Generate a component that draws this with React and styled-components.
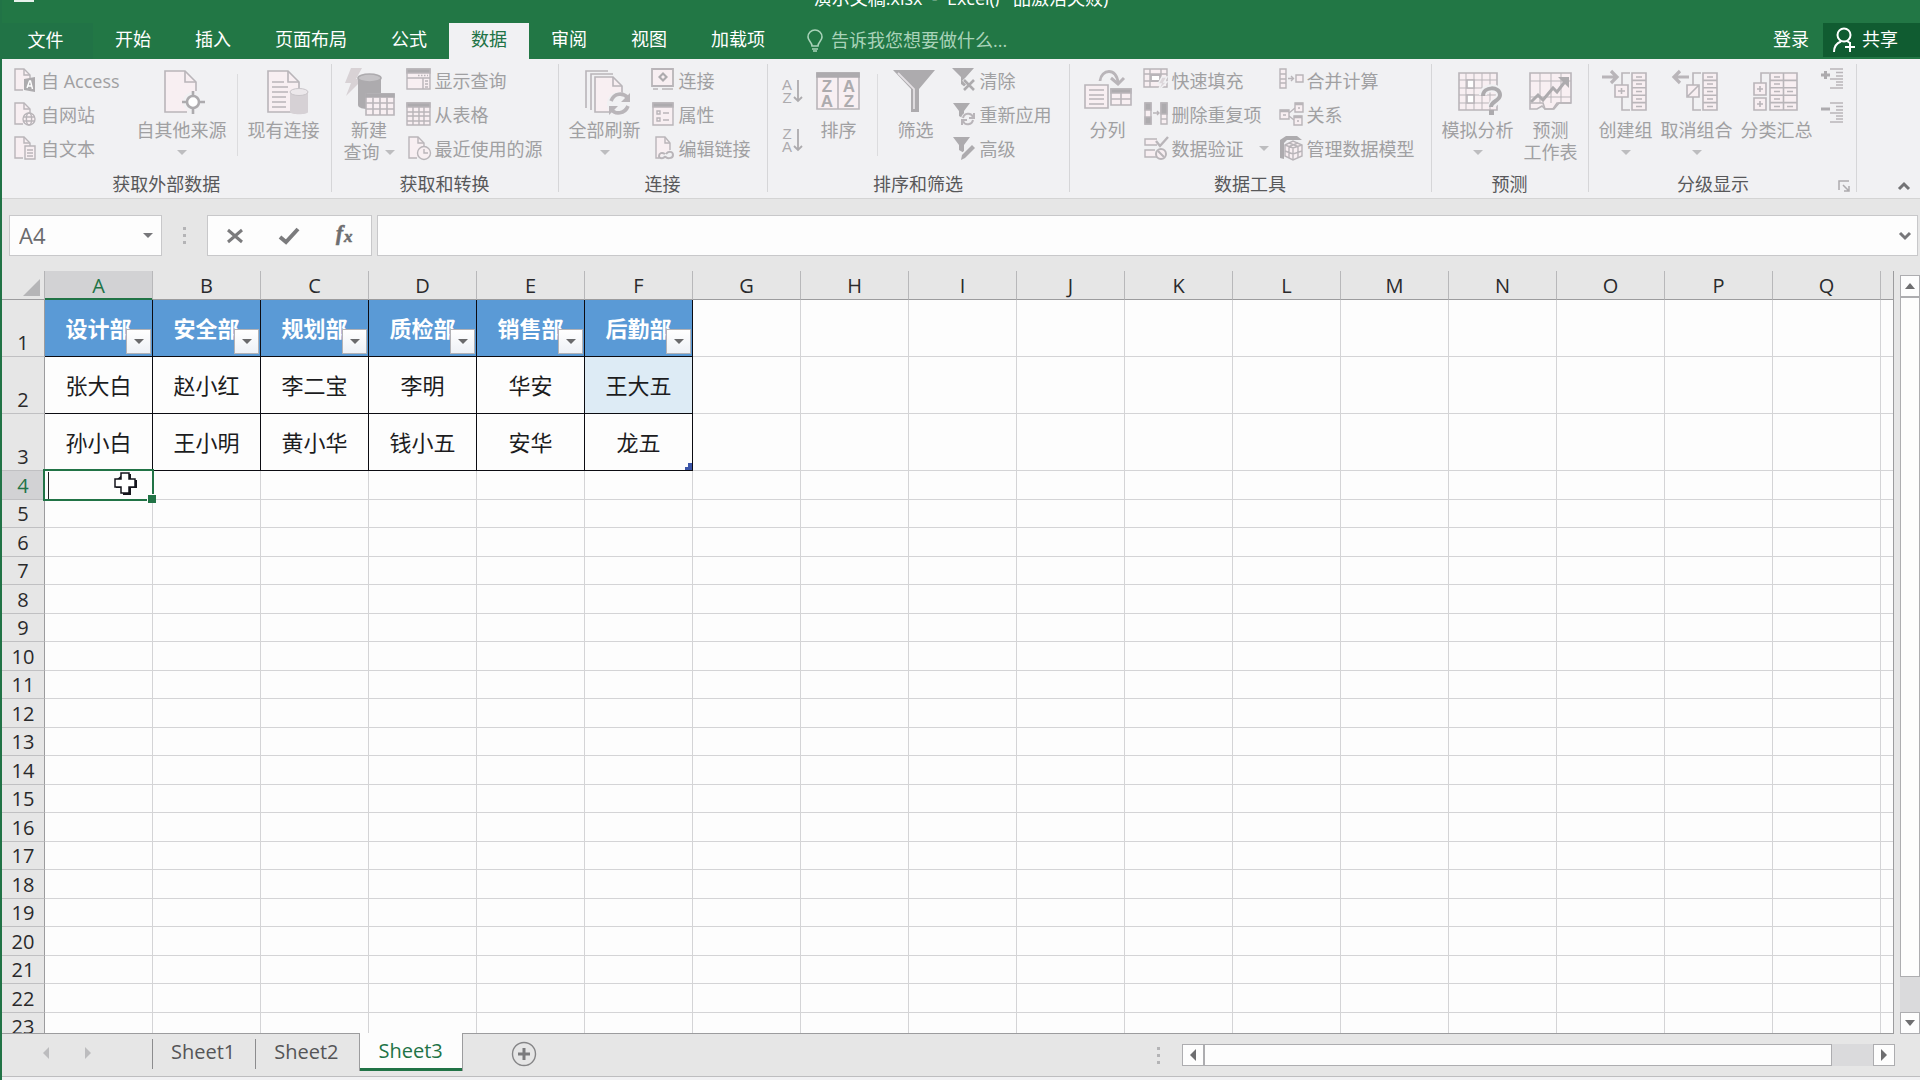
import React from 'react';
import styled, { createGlobalStyle, css } from 'styled-components';

const GlobalStyle = createGlobalStyle`
  * {
    box-sizing: border-box;
  }
  body {
    margin: 0;
    overflow: hidden;
    background: #e6e6e6;
    font-family: "Open Sans", "Noto Sans CJK SC", sans-serif;
    font-size: 18px;
  }
  button, input {
    margin: 0;
    padding: 0;
    border: 0;
    background: none;
    font: inherit;
    color: inherit;
  }
  svg {
    display: block;
    flex: none;
    overflow: visible;
  }
`

const Window = styled.div`
  display: flex;
  flex-direction: column;
  height: 100vh;
  border-left: 2px solid #217346;
`

/* ---------- header ---------- */

const TitleBar = styled.header`
  position: relative;
  display: flex;
  justify-content: center;
  align-items: flex-end;
  height: 23px;
  padding-bottom: 13px;
  overflow: hidden;
  background: #227745;
  color: #fff;
  line-height: 24px;
  white-space: pre;
`

const QuickAccess = styled.i`
  position: absolute;
  left: 12px;
  top: 0;
  width: 20px;
  height: 2px;
  background: #e8f2ec;
`

const TabBar = styled.nav`
  display: flex;
  height: 36px;
  background: #227745;
  color: #fff;
  line-height: 30px;
`

const RibbonTab = styled.button`
  padding: 0 22px 4px;
  ${({ $file }) => $file && css`
    width: 91px;
    padding: 0 4px 2px 0;
    background: #217346;
  `}
  ${({ $active }) => $active && css`
    background: #f1f1f3;
    color: #217346;
  `}
`

const TellMe = styled.label`
  display: flex;
  align-items: center;
  gap: 8px;
  margin-left: 20px;
  color: #a9d3b9;
  input {
    width: 200px;
    height: 32px;
    padding-bottom: 2px;
    outline: 0;
  }
  input::placeholder {
    color: #a9d3b9;
    opacity: 1;
  }
`

const Account = styled.div`
  display: flex;
  margin-left: auto;
`

const ShareButton = styled.button`
  display: flex;
  align-items: center;
  gap: 5px;
  height: 34px;
  padding: 0 22px 2px 10px;
  margin-left: -8px;
  background: #105c31;
`

/* ---------- ribbon ---------- */

const Ribbon = styled.section`
  display: flex;
  height: 140px;
  padding: 5px 0 6px;
  background: #f1f1f3;
  border-bottom: 1px solid #d4d4d4;
  color: #a0a0a2;
`

const GroupWrapp = styled.div`
  flex: none;
  border-right: 1px solid #d6d6d8;
`

const GroupBody = styled.div`
  display: flex;
  gap: ${({ $gap }) => $gap}px;
  height: 102px;
  padding: ${({ $pad }) => $pad};
`

const GroupTitle = styled.div`
  position: relative;
  margin-top: 10px;
  padding-right: ${({ $launcher }) => ($launcher ? 18 : 0)}px;
  line-height: 16px;
  text-align: center;
  color: #58585a;
`

const Launcher = styled.button`
  position: absolute;
  right: 6px;
  top: 4px;
`

const Column = styled.div`
  display: flex;
  flex-direction: column;
  align-items: flex-start;
  margin-top: -1px;
  ${({ $roomy }) => $roomy && css`
    margin-right: 5px;
  `}
  ${({ $narrow }) => $narrow && css`
    margin-left: 2px;
  `}
`

const SmallButton = styled.button`
  display: flex;
  align-items: center;
  gap: 4px;
  height: 34px;
  padding: 0 2px;
  white-space: nowrap;
`

const SortColumn = styled(Column)`
  justify-content: space-around;
  padding: 4px 0 2px;
`

const SortButton = styled.button`
  width: 26px;
  padding: 0 2px;
`

const BigButton = styled.button`
  display: flex;
  flex-direction: column;
  align-items: center;
  padding: 3px 4px 0;
  white-space: nowrap;
`

const BigLabel = styled.span`
  display: flex;
  flex-direction: column;
  align-items: center;
  margin-top: 4px;
  line-height: 22px;
`

const LabelLine = styled.span`
  display: flex;
  align-items: center;
  gap: 5px;
  height: 22px;
`

const Divider = styled.i`
  width: 1px;
  height: 82px;
  margin: 10px ${({ $space = 0 }) => $space}px 0;
  background: #dcdcde;
`

const Arrow = styled.i`
  display: block;
  width: 0;
  border: 5px solid transparent;
  border-top-color: ${({ $color = '#bdbdbf' }) => $color};
  border-bottom: 0;
  ${({ $far }) => $far && css`
    margin-left: 11px;
  `}
`

const CollapseButton = styled.button`
  align-self: flex-end;
  margin: 0 9px 0 auto;
`

/* ---------- formula bar ---------- */

const FormulaBar = styled.div`
  display: flex;
  padding: 16px 2px 15px 7px;
  height: 72px;
  color: #6b6b6d;
`

const Field = styled.div`
  display: flex;
  align-items: center;
  height: 41px;
  border: 1px solid #c8c8ca;
  background: #fdfdfd;
`

const NameBox = styled(Field)`
  width: 153px;
  padding: 0 8px 0 9px;
  input {
    width: 124px;
    padding-bottom: 2px;
    font-size: 22px;
    outline: 0;
  }
`

const Dots = styled.div`
  display: grid;
  gap: 4px;
  align-content: center;
  width: ${({ $width }) => $width}px;
  justify-content: center;
  i {
    width: 3px;
    height: 3px;
    background: #b4b4b6;
  }
`

const FormulaTools = styled(Field)`
  justify-content: space-around;
  width: 165px;
  margin-right: 5px;
`

const FormulaField = styled(Field)`
  flex: 1;
  padding-right: 5px;
  input {
    flex: 1;
    min-width: 0;
    height: 39px;
    padding: 0 8px;
    outline: 0;
  }
`

/* ---------- grid ---------- */

const Workspace = styled.main`
  flex: 1;
  display: flex;
  min-height: 0;
`

const GridArea = styled.div`
  flex: 1;
  min-width: 0;
  overflow: hidden;
  border-bottom: 1px solid #9c9c9e;
`

const SheetTable = styled.table`
  width: 100%;
  table-layout: fixed;
  border-collapse: separate;
  border-spacing: 0;
  border-right: 1px solid #9c9c9e;
  background: #fdfdfd;
  font-size: 20px;
  th, td {
    padding: 0;
    font-weight: 400;
  }
`

const Corner = styled.th`
  background: #e6e6e6;
  border-right: 1px solid #b4b4b6;
  border-bottom: 1px solid #9c9c9e;
  svg {
    margin: 4px 4px 0 auto;
  }
`

const ColumnHead = styled.th`
  height: 29px;
  && {
    padding-top: 2px;
  }
  line-height: 26px;
  background: ${({ $selected }) => ($selected ? '#d2d2d4' : '#e6e6e6')};
  border-right: 1px solid #b8b8ba;
  border-bottom: 1px solid ${({ $selected }) => ($selected ? '#217346' : '#9c9c9e')};
  box-shadow: ${({ $selected }) => ($selected ? 'inset 0 -1px #217346' : 'none')};
  color: ${({ $selected }) => ($selected ? '#217346' : '#2a2a2c')};
  &:last-child {
    border-right: 0;
  }
`

const Row = styled.tr`
  height: 28px;
  &:nth-child(even) {
    height: 29px;
  }
  ${({ $tall }) => $tall && css`
    &, &:nth-child(even) {
      height: 57px;
    }
  `}
`

const RowHead = styled.th`
  vertical-align: bottom;
  line-height: 26px;
  background: ${({ $selected }) => ($selected ? '#d2d2d4' : '#e6e6e6')};
  border-right: 1px solid #9c9c9e;
  border-bottom: 1px solid #c0c0c2;
  color: ${({ $selected }) => ($selected ? '#217346' : '#2a2a2c')};
`

const Cell = styled.td`
  position: relative;
  border-right: 1px solid #d4d4d6;
  border-bottom: 1px solid #d4d4d6;
  line-height: 24px;
  text-align: center;
  &:last-child {
    border-right: 0;
  }
  ${({ $filled }) => $filled && css`
    border-color: #0c0c12;
    color: #1c1c1e;
    font-size: 22px;
  `}
  ${({ $tint }) => $tint && css`
    background: #ddebf5;
  `}
  ${({ $title }) => $title && css`
    background: #5a9ad6;
    color: #fff;
    && {
      font-weight: 700;
    }
  `}
`

const FilterButton = styled.button`
  position: absolute;
  right: 1px;
  bottom: 2px;
  display: flex;
  align-items: center;
  justify-content: center;
  width: 25px;
  height: 25px;
  border: 1px solid #b2b2b6;
  background: linear-gradient(#fff, #eef1f6);
`

const TableCorner = styled.svg`
  position: absolute;
  right: 0;
  bottom: 0;
`

const Selection = styled.div`
  position: absolute;
  z-index: 1;
  inset: -2px -2px -2px -2px;
  border: 2px solid #217346;
  &:before {
    content: '';
    position: absolute;
    left: 3px;
    top: 1px;
    bottom: 0;
    width: 1px;
    background: #222;
  }
  &:after {
    content: '';
    position: absolute;
    right: -4px;
    bottom: -4px;
    width: 8px;
    height: 8px;
    border: solid #fdfdfd;
    border-width: 1px 0 0 1px;
    background: #217346;
  }
`

const Pointer = styled.svg`
  position: absolute;
  z-index: 2;
  left: 69px;
  top: 1px;
`

/* ---------- scroll bars and sheet tabs ---------- */

const VerticalScroll = styled.div`
  display: flex;
  flex-direction: column;
  width: 20px;
  margin: 4px 0 0 6px;
  background: #dadadc;
`

const ScrollButton = styled.button`
  flex: none;
  display: flex;
  align-items: center;
  justify-content: center;
  width: ${({ $wide }) => ($wide ? 22 : 20)}px;
  height: 22px;
  border: 1px solid #adadb0;
  background: #fdfdfd;
`

const Thumb = styled.div`
  flex: ${({ $size }) => $size};
  border: 1px solid #adadb0;
  background: #fdfdfd;
`

const Track = styled.div`
  flex: ${({ $size }) => $size};
`

const SheetBar = styled.footer`
  display: flex;
  height: 42px;
  color: #555557;
  font-size: 20px;
`

const SheetNav = styled.div`
  display: flex;
  align-items: center;
  gap: 30px;
  width: 150px;
  padding: 0 0 4px 38px;
`

const SheetTab = styled.button`
  height: 30px;
  margin-top: 5px;
  padding: 0 20px 4px 18px;
  border-left: 1px solid #8c8c8e;
  line-height: 26px;
  ${({ $active }) => $active && css`
    height: 38px;
    margin-top: -1px;
    padding: 0 19px 2px;
    border: solid #9c9c9e;
    border-width: 0 1px;
    background: #fdfdfd;
    box-shadow: inset 0 -3px #217346;
    color: #217346;
    line-height: 32px;
  `}
`

const AddSheet = styled.button`
  margin: 0 0 2px 48px;
`

const HorizontalScroll = styled.div`
  display: flex;
  width: 713px;
  height: 22px;
  margin: 10px 25px 0 0;
  background: #dadadc;
`

const StatusEdge = styled.div`
  height: 4px;
  border-top: 1px solid #bdbdbf;
  background: #f1f1f3;
`

/* ---------- icons ---------- */

const line = '#b9b5b9'
const dark = '#adabae'
const fill = '#f8eff2'

const Small = ({ children }) => (
  <svg width="24" height="24" viewBox="0 0 24 24" fill={fill} stroke={line} strokeWidth="1.4" aria-hidden="true">{children}</svg>
)
const Big = ({ children }) => (
  <svg width="48" height="48" viewBox="0 0 48 48" fill={fill} stroke={line} strokeWidth="1.6" aria-hidden="true">{children}</svg>
)
const Bare = ({ w, h, children }) => (
  <svg width={w} height={h} viewBox={`0 0 ${w} ${h}`} fill="none" aria-hidden="true">{children}</svg>
)

const SmallPage = () => (
  <>
    <path d="M10 22H2V1h9l6 6v4" />
    <path d="M11 1v6h6" fill="none" />
  </>
)

const smallIcons = {
  access: <Small>
    <SmallPage />
    <path d="M11 11l11-2v15l-11-2z" fill={dark} stroke="none" />
    <path d="M14 20l2.500-7h1l2 8M14.500 18h4" stroke="#fff" fill="none" />
  </Small>,
  web: <Small>
    <SmallPage />
    <circle cx="16" cy="17" r="6" />
    <ellipse cx="16" cy="17" rx="2.600" ry="6" fill="none" />
    <path d="M10 15h12M10 19h12" />
  </Small>,
  text: <Small>
    <SmallPage />
    <path d="M12 10h10v13H12z" />
    <path d="M14 14h6M14 17h6M14 20h6" />
  </Small>,
  showQuery: <Small>
    <path d="M0 1h23v20H0z" />
    <path d="M0 1h23v4H0z" fill={dark} />
    <path d="M0 10h23M16 10v11" />
    <path d="M11 7.500h10" strokeDasharray="1.500 1.500" />
    <path d="M18 13h3M18 16h3M18 19h3" />
  </Small>,
  fromTable: <Small>
    <path d="M0 1h23v22H0z" />
    <path d="M0 1h23v4H0z" fill={dark} />
    <path d="M0 10h23M0 14h23M0 19h23M6 5v18M12 5v18M17 5v18" />
  </Small>,
  recent: <Small>
    <SmallPage />
    <circle cx="17" cy="17" r="6.500" />
    <path d="M17 13v4h4" fill="none" />
  </Small>,
  connection: <Small>
    <path d="M1 1h21v17H1z" strokeWidth="1.800" />
    <path d="M2 21h5M11 21h11" />
    <path d="M12 4l5 5-5 5-5-5z" fill={dark} stroke="none" />
    <path d="M12 7l2 2-2 2-2-2z" stroke="none" />
  </Small>,
  properties: <Small>
    <path d="M2 1h20v22H2z" />
    <path d="M2 1h20v4H2z" fill={dark} />
    <path d="M6 9h3v3H6zM6 16h3v3H6zM12 11h6M12 18h6" />
  </Small>,
  editLinks: <Small>
    <path d="M8 22H5V1h9l5 6v7" />
    <path d="M14 1v6h5" fill="none" />
    <path d="M14 20c-1 3-6 3-6 0s3-4 6-2M14 20c1 3 8 3 8-1s-5-4-7-1" fill="none" strokeWidth="2" />
  </Small>,
  clear: <Small>
    <path d="M0 0h22l-8 9v11l-5-4V9z" fill={dark} stroke="none" />
    <path d="M12 11l11 11M23 11L12 22" stroke="#f1f1f3" strokeWidth="5" />
    <path d="M12 12l10 10M22 12L12 22" stroke={dark} strokeWidth="2.600" />
  </Small>,
  reapply: <Small>
    <path d="M1 1h17l-6 8v8l-5-3V9z" fill={dark} stroke="none" />
    <circle cx="16" cy="17" r="7" stroke="none" fill="#f1f1f3" />
    <path d="M11 16c1-5 8-6 10-1M21 18c-1 5-8 6-10 1M22 11v5h-5M10 23v-5h5" fill="none" strokeWidth="2" />
  </Small>,
  advanced: <Small>
    <path d="M1 1h17l-6 8v8l-5-3V9z" fill={dark} stroke="none" />
    <path d="M10 22l11-12" stroke="#f1f1f3" strokeWidth="7" />
    <path d="M9 24l1-5 10-10 3 3-10 10z" fill={dark} stroke="none" />
  </Small>,
  flashFill: <Small>
    <path d="M0 1h23v18H0z" />
    <path d="M0 6h23M0 13h16M6 1v18M17 1v10" />
    <path d="M7 7h9v6H7z" fill="#fff" strokeWidth="1.800" />
    <path d="M18 9h5l-3 5h3l-9 9 3-7h-3z" fill="#dcd6da" stroke="#f1f1f3" />
  </Small>,
  duplicates: <Small>
    <path d="M1 1h6v21H1zM17 1h6v21h-6z" />
    <path d="M1 1h6v7H1zM1 15h6v7H1zM17 1h6v11h-6z" fill={dark} />
    <path d="M9 11h6M13 9l2 2-2 2" fill="none" />
    <path d="M17 17h6" />
  </Small>,
  validation: <Small>
    <path d="M13 3H1v6h12M11 14H1v7h12" />
    <path d="M12 5l4 5 8-9" fill="none" strokeWidth="2.400" />
    <circle cx="17" cy="18" r="5" strokeWidth="2" />
    <path d="M14 15l6 6" strokeWidth="2" />
  </Small>,
  consolidate: <Small>
    <path d="M1 1h6v19H1zM1 6h6M1 11h6M1 15h6M17 7h7v7h-7z" />
    <path d="M9 10.500h5M12 8l2.500 2.500L12 13" fill="none" />
  </Small>,
  relations: <Small>
    <path d="M10 11l6-5M10 14l5 4" />
    <path d="M1 8h9v9H1zM16 1h8v9h-8zM15 14h8v9h-8z" />
    <path d="M1 9h9M16 2h8M15 15h8" strokeWidth="2.600" />
    <path d="M4 13h3M19 6h2M18 19h2" />
  </Small>,
  model: <Small>
    <path d="M1 22V4l6-4h11l5 4H8L5 7v16z" fill={dark} stroke="none" />
    <path d="M6 9l8-4 9 4v11l-9 4-8-4z" />
    <path d="M6 9l8 3 9-3M14 12v12M10 7l9 3.500V22M19 7l-9 3.500V22M6 15l8 3 9-3" fill="none" />
  </Small>,
}

const bigIcons = {
  otherSource: <Big>
    <path d="M29 45H7V4h20l11 11v9" />
    <path d="M27 4v11h11" fill="none" />
    <circle cx="35" cy="35" r="10" fill="#f1f1f3" stroke="none" />
    <circle cx="35" cy="35" r="6" fill="#fff" stroke={dark} strokeWidth="2.600" />
    <path d="M35 24v5M35 41v6M24 35h5M41 35h6" stroke={dark} strokeWidth="2.600" />
  </Big>,
  existing: <Big>
    <path d="M31 45H8V4h20l11 11v8" />
    <path d="M28 4v11h11M12 15h12M12 20h16M12 25h16M12 30h14M12 35h14M12 40h14" fill="none" />
    <path d="M30 25v20c0 3 18 3 18 0V25" fill="#d6d1d5" stroke="none" />
    <ellipse cx="39" cy="25" rx="9" ry="3.500" fill="#ece8eb" stroke="#c9c5c9" strokeWidth="1" />
  </Big>,
  newQuery: <Big>
    <path d="M6 1h11l-6 11h7L1 29l5-13H0z" fill="#d8d2d5" stroke="none" />
    <path d="M13 11v27c0 3 6 4 9 4V26h14V11" fill={dark} stroke="none" />
    <ellipse cx="24.500" cy="11" rx="11.500" ry="4" fill="#c5c3c6" stroke={dark} />
    <path d="M21 27h28v21H21z" />
    <path d="M21 27h28v3H21z" fill={dark} stroke={dark} />
    <path d="M21 36h28M21 42h28M28 30v18M35 30v18M42 30v18" />
  </Big>,
  refresh: <Big>
    <path d="M5 41V4h22M10 43V7h22" fill="none" />
    <path d="M28 45H14V10h18l9 9v8" />
    <path d="M32 10v9h9" fill="none" />
    <circle cx="38" cy="37" r="12" fill="#f1f1f3" stroke="none" />
    <path d="M30 34c3-8 12-9 17-3M47 39c-3 8-13 9-17 3" fill="none" strokeWidth="3.600" />
    <path d="M49 26v9h-9zM28 48v-9h9z" fill={line} stroke="none" />
  </Big>,
  sort: <Big>
    <path d="M2 6h42v36H2zM23 9v33" />
    <path d="M2 6h42v4H2z" fill={dark} stroke={dark} />
    <g fill={dark} stroke="none" fontFamily="Liberation Sans, sans-serif" fontWeight="700" fontSize="17" textAnchor="middle">
      <text x="12" y="25">Z</text>
      <text x="12" y="40">A</text>
      <text x="34" y="25">A</text>
      <text x="34" y="40">Z</text>
    </g>
  </Big>,
  filter: <Big>
    <path d="M1 3h42L27 22v23h-8V22z" fill={dark} stroke="none" />
    <path d="M6 6l16 16v20" stroke="#e4e0e4" strokeWidth="1.800" fill="none" />
  </Big>,
  split: <Big>
    <path d="M1 18h23v23H1z" />
    <path d="M5 23h15M5 28h15M5 32h15M5 37h15" />
    <path d="M27 22h20v16H27z" />
    <path d="M27 22h20v4H27z" fill={dark} />
    <path d="M27 32h20M37 26v12" />
    <path d="M16 14c1-12 17-14 18 2" fill="none" stroke={line} strokeWidth="2.800" />
    <path d="M27 11l7 6 6-6" fill="none" strokeWidth="3" />
  </Big>,
  whatIf: <Big>
    <path d="M5 6h38v37H5z" />
    <path d="M5 13h38M5 21h38M5 28h38M5 36h38M12 6v37M20 6v37M28 6v37M36 6v37" strokeWidth="1" />
    <path d="M13 13h7v8h-7zM13 28h7v8h-7z" fill="#fff" />
    <path d="M29 28c0-9 17-9 17 0 0 6-8 6-8 12" fill="none" stroke="#f1f1f3" strokeWidth="8" />
    <path d="M29 29c0-10 17-10 17-1 0 6-9 6-9 12" fill="none" stroke={dark} strokeWidth="4" />
    <path d="M35 43h5v5h-5z" fill={dark} stroke="none" />
  </Big>,
  forecast: <Big>
    <path d="M3 6h41v30H32l-5 6h-9l-3-3-5 3H3z" />
    <path d="M3 14h41M3 30h41M13 6v30M24 6v30M34 6v30" strokeWidth="1" />
    <path d="M4 35l7-7 5 5 10-12 4 4 10-13" fill="none" stroke={dark} strokeWidth="3" />
    <path d="M31 10h11v11z" fill={dark} stroke="none" />
    <path d="M3 36h13l2 6h8l4-6h14" fill="none" />
  </Big>,
  group: <Big>
    <path d="M0 10h14M9 4l6 6-6 6" fill="none" strokeWidth="3.200" />
    <path d="M28 6h-8v37h8" fill="none" />
    <path d="M13 18h13v12H13zM19.500 21v6M16 24h7" />
    <path d="M30 6h14v37H30zM30 13.400h14M30 20.800h14M30 28.200h14M30 35.600h14" />
    <path d="M34 10h6M34 17h6M34 24.500h6M34 32h6M34 39.500h6" />
  </Big>,
  ungroup: <Big>
    <path d="M2 10h14M7 4l-6 6 6 6" fill="none" strokeWidth="3.200" />
    <path d="M28 6h-8v37h8" fill="none" />
    <path d="M14 18h12v12H14zM15 29l10-10" />
    <path d="M30 6h14v37H30zM30 13.400h14M30 20.800h14M30 28.200h14M30 35.600h14" />
    <path d="M34 10h6M34 17h6M34 24.500h6M34 32h6M34 39.500h6" />
  </Big>,
  subtotal: <Big>
    <path d="M16 6H8v10" fill="none" />
    <path d="M1 16h12v12H1zM7 19v6M4 22h6M1 31h12v12H1zM7 34v6M4 37h6" />
    <path d="M17 6h27v37H17zM30.500 6v37M17 13.400h27M17 20.800h27M17 28.200h27M17 35.600h27" />
    <path d="M21 10h6M21 17h6M21 24.500h6M21 32h6M21 39.500h6M34 24.500h6M34 39.500h6" />
  </Big>,
}

const SortIcon = ({ letters }) => (
  <Bare w={22} h={26}>
    <g fill={dark} fontFamily="Liberation Sans, sans-serif" fontSize="15" textAnchor="middle">
      <text x="6" y="12">{letters[0]}</text>
      <text x="6" y="25">{letters[1]}</text>
    </g>
    <path d="M17 2v21M13 19l4 4 4-4" stroke={dark} strokeWidth="1.800" />
  </Bare>
)

const DetailIcon = ({ plus }) => (
  <Small>
    <path d={plus ? 'M0 7h9M4.500 3v8' : 'M0 7h9'} stroke={dark} strokeWidth="3" />
    <path d="M9 1h13M9 11h13M9 20h13M15 4.500h7M15 8h7M15 14h7M15 17h7" strokeWidth="1.400" />
  </Small>
)

const Triangle = ({ dir, color = '#6e6e70' }) => {
  const shapes = { up: 'M1 9h10L6 3z', down: 'M1 3h10L6 9z', left: 'M9 0v12L3 6z', right: 'M3 0v12l6-6z' }
  return <Bare w={12} h={12}><path d={shapes[dir]} fill={color} /></Bare>
}

/* ---------- parts ---------- */

const Group = ({ title, pad, gap = 6, launcher, children }) => (
  <GroupWrapp>
    <GroupBody $gap={gap} $pad={pad}>{children}</GroupBody>
    <GroupTitle $launcher={launcher}>
      {title}
      {launcher && (
        <Launcher aria-label={title}>
          <Bare w={12} h={12}><path d="M1 10V1h10M5 5l6 6M11 6v5H6" stroke={dark} strokeWidth="1.500" /></Bare>
        </Launcher>
      )}
    </GroupTitle>
  </GroupWrapp>
)

const Tool = ({ icon, label, arrow }) => (
  <SmallButton>
    {smallIcons[icon]}
    {label}
    {arrow && <Arrow $far />}
  </SmallButton>
)

const BigTool = ({ icon, label, second, arrow }) => (
  <BigButton>
    {bigIcons[icon]}
    <BigLabel>
      <LabelLine>{label}</LabelLine>
      {(second || arrow) && <LabelLine>{second}{arrow && <Arrow />}</LabelLine>}
    </BigLabel>
  </BigButton>
)

const tabs = ['开始', '插入', '页面布局', '公式', '数据', '审阅', '视图', '加载项']
const columns = 'ABCDEFGHIJKLMNOPQ'.split('')
const data = [
  ['设计部', '安全部', '规划部', '质检部', '销售部', '后勤部'],
  ['张大白', '赵小红', '李二宝', '李明', '华安', '王大五'],
  ['孙小白', '王小明', '黄小华', '钱小五', '安华', '龙五'],
]

const GridCell = ({ row, col }) => {
  const value = data[row]?.[col]
  const selected = row === 3 && col === 0
  return (
    <Cell $filled={!!value} $title={!!value && row === 0} $tint={row === 1 && col === 5}>
      {value}
      {value && row === 0 && <FilterButton aria-label={value}><Arrow $color="#6a6a6c" /></FilterButton>}
      {row === 2 && col === 5 && (
        <TableCorner width="7" height="7"><path d="M7 0v7H0V4h3V0z" fill="#3b55a8" /></TableCorner>
      )}
      {selected && (
        <>
          <Selection />
          <Pointer width="24" height="24" viewBox="0 0 24 24">
            <path d="M9 2h8v6h6v8h-6v7H9v-7H2V8" fill="#15151c" />
            <path d="M7 1h8v6h6v8h-6v6H7v-6H1V7h6z" fill="#fff" stroke="#15151c" strokeWidth="1.500" />
          </Pointer>
        </>
      )}
    </Cell>
  )
}

function Sheet() {
  return (
    <GridArea>
      <SheetTable>
        <colgroup>
          <col style={{ width: 43 }} />
          {columns.map(name => <col key={name} style={{ width: 108 }} />)}
          <col />
        </colgroup>
        <thead>
          <tr>
            <Corner><Bare w={17} h={17}><path d="M17 0v17H0z" fill="#b5b5b7" /></Bare></Corner>
            {columns.map((name, i) => <ColumnHead key={name} $selected={i === 0}>{name}</ColumnHead>)}
            <ColumnHead />
          </tr>
        </thead>
        <tbody>
          {Array.from({ length: 23 }, (_, row) => (
            <Row key={row} $tall={row < 3}>
              <RowHead $selected={row === 3}>{row + 1}</RowHead>
              {columns.map((name, col) => <GridCell key={name} row={row} col={col} />)}
              <Cell />
            </Row>
          ))}
        </tbody>
      </SheetTable>
    </GridArea>
  )
}

function App() {
  return (
    <Window>
      <GlobalStyle />
      <TitleBar>
        <QuickAccess />
        演示文稿.xlsx  -  Excel(产品激活失败)
      </TitleBar>
      <TabBar>
        <RibbonTab $file>文件</RibbonTab>
        {tabs.map(name => <RibbonTab key={name} $active={name === '数据'}>{name}</RibbonTab>)}
        <TellMe>
          <Bare w={16} h={22}>
            <path d="M5 16c0-4-4-5-4-9a7 7 0 0 1 14 0c0 4-4 5-4 9zM5 19h6M6 21h4" stroke="#a9d3b9" strokeWidth="1.600" />
          </Bare>
          <input aria-label="告诉我您想要做什么..." placeholder="告诉我您想要做什么..." />
        </TellMe>
        <Account>
          <RibbonTab>登录</RibbonTab>
          <ShareButton>
            <Bare w={24} h={24}>
              <circle cx="11" cy="8" r="6.500" stroke="#fff" strokeWidth="2" />
              <path d="M1 25c0-6 3-9 7-10.500M14 14l3 2M17 15v10M12 20h10" stroke="#fff" strokeWidth="2" />
            </Bare>
            共享
          </ShareButton>
        </Account>
      </TabBar>

      <Ribbon>
        <Group title="获取外部数据" pad="0 7px 0 9px">
          <Column $roomy>
            <Tool icon="access" label="自 Access" />
            <Tool icon="web" label="自网站" />
            <Tool icon="text" label="自文本" />
          </Column>
          <BigTool icon="otherSource" label="自其他来源" arrow />
          <Divider />
          <BigTool icon="existing" label="现有连接" />
        </Group>
        <Group title="获取和转换" pad="0 13px 0 8px">
          <BigTool icon="newQuery" label="新建" second="查询" arrow />
          <Column>
            <Tool icon="showQuery" label="显示查询" />
            <Tool icon="fromTable" label="从表格" />
            <Tool icon="recent" label="最近使用的源" />
          </Column>
        </Group>
        <Group title="连接" pad="0 14px 0 6px" gap={4}>
          <BigTool icon="refresh" label="全部刷新" arrow />
          <Column>
            <Tool icon="connection" label="连接" />
            <Tool icon="properties" label="属性" />
            <Tool icon="editLinks" label="编辑链接" />
          </Column>
        </Group>
        <Group title="排序和筛选" pad="0 15px 0 11px">
          <SortColumn>
            <SortButton aria-label="升序"><SortIcon letters="AZ" /></SortButton>
            <SortButton aria-label="降序"><SortIcon letters="ZA" /></SortButton>
          </SortColumn>
          <BigTool icon="sort" label="排序" />
          <Divider $space={4} />
          <BigTool icon="filter" label="筛选" />
          <Column>
            <Tool icon="clear" label="清除" />
            <Tool icon="reapply" label="重新应用" />
            <Tool icon="advanced" label="高级" />
          </Column>
        </Group>
        <Group title="数据工具" pad="0 14px 0 10px">
          <BigTool icon="split" label="分列" />
          <Column>
            <Tool icon="flashFill" label="快速填充" />
            <Tool icon="duplicates" label="删除重复项" />
            <Tool icon="validation" label="数据验证" arrow />
          </Column>
          <Column>
            <Tool icon="consolidate" label="合并计算" />
            <Tool icon="relations" label="关系" />
            <Tool icon="model" label="管理数据模型" />
          </Column>
        </Group>
        <Group title="预测" pad="0 6px" gap={2}>
          <BigTool icon="whatIf" label="模拟分析" arrow />
          <BigTool icon="forecast" label="预测" second="工作表" />
        </Group>
        <Group title="分级显示" pad="0 9px 0 6px" gap={0} launcher>
          <BigTool icon="group" label="创建组" arrow />
          <BigTool icon="ungroup" label="取消组合" arrow />
          <BigTool icon="subtotal" label="分类汇总" />
          <Column $narrow>
            <SmallButton aria-label="显示明细数据"><DetailIcon plus /></SmallButton>
            <SmallButton aria-label="隐藏明细数据"><DetailIcon /></SmallButton>
          </Column>
        </Group>
        <CollapseButton aria-label="折叠功能区">
          <Bare w={14} h={12}><path d="M2 9l5-5 5 5" stroke="#737375" strokeWidth="3" /></Bare>
        </CollapseButton>
      </Ribbon>

      <FormulaBar>
        <NameBox>
          <input aria-label="名称框" defaultValue="A4" />
          <button aria-label="名称框"><Arrow $color="#77777a" /></button>
        </NameBox>
        <Dots $width={45}><i /><i /><i /></Dots>
        <FormulaTools>
          <button aria-label="取消">
            <Bare w={18} h={18}><path d="M2 3l14 12M16 3L2 15" stroke="#7b7b7d" strokeWidth="3" /></Bare>
          </button>
          <button aria-label="输入">
            <Bare w={20} h={18}><path d="M1 10l6 5L19 2" stroke="#7b7b7d" strokeWidth="4" /></Bare>
          </button>
          <button aria-label="插入函数">
            <svg width="20" height="20" viewBox="0 0 20 20" fill="#6e6e70" stroke="#6e6e70" strokeWidth="0.600" fontFamily="Liberation Serif, serif" fontStyle="italic" fontWeight="700">
              <text x="2" y="14" fontSize="21">f</text>
              <text x="10" y="16" fontSize="17">x</text>
            </svg>
          </button>
        </FormulaTools>
        <FormulaField>
          <input aria-label="编辑栏" />
          <button aria-label="展开编辑栏">
            <Bare w={14} h={12}><path d="M2 3l5 5 5-5" stroke="#77777a" strokeWidth="3" /></Bare>
          </button>
        </FormulaField>
      </FormulaBar>

      <Workspace>
        <Sheet />
        <VerticalScroll>
          <ScrollButton aria-label="向上滚动"><Triangle dir="up" /></ScrollButton>
          <Thumb $size={681} />
          <Track $size={35} />
          <ScrollButton aria-label="向下滚动"><Triangle dir="down" /></ScrollButton>
        </VerticalScroll>
      </Workspace>

      <SheetBar>
        <SheetNav>
          <button aria-label="上一个工作表"><Triangle dir="left" color="#bcbcbe" /></button>
          <button aria-label="下一个工作表"><Triangle dir="right" color="#bcbcbe" /></button>
        </SheetNav>
        <SheetTab>Sheet1</SheetTab>
        <SheetTab>Sheet2</SheetTab>
        <SheetTab $active>Sheet3</SheetTab>
        <AddSheet aria-label="新工作表">
          <Bare w={26} h={26}>
            <circle cx="13" cy="13" r="11.500" stroke="#858587" strokeWidth="1.400" />
            <path d="M13 7v12M7 13h12" stroke="#7b7b7d" strokeWidth="3" />
          </Bare>
        </AddSheet>
        <Dots $width={48} style={{ marginLeft: 'auto' }}><i /><i /><i /></Dots>
        <HorizontalScroll>
          <ScrollButton $wide aria-label="向左滚动"><Triangle dir="left" /></ScrollButton>
          <Thumb $size={627} />
          <Track $size={41} />
          <ScrollButton $wide aria-label="向右滚动"><Triangle dir="right" /></ScrollButton>
        </HorizontalScroll>
      </SheetBar>
      <StatusEdge />
    </Window>
  )
}

export default App;
